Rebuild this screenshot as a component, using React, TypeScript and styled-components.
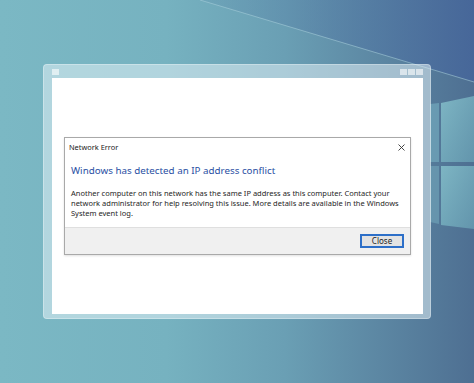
import React from "react";
import styled, { createGlobalStyle } from "styled-components";

const GlobalStyle = createGlobalStyle`
  html, body {
    margin: 0;
    padding: 0;
    width: 100%;
    height: 100%;
    overflow: hidden;
  }
  #root {
    width: 100%;
    height: 100%;
  }
  body {
    font-family: "Noto Sans", "Open Sans", sans-serif;
  }
`;

const Desktop = styled.div`
  position: relative;
  width: 474px;
  height: 383px;
  display: flex;
  align-items: center;
  justify-content: center;
  overflow: hidden;
  background: linear-gradient(90deg, #7bb8c4 0%, #76b2c0 35%, #6a9fb4 60%, #4e6f92 100%);
`;

const Wallpaper = styled.svg`
  position: absolute;
  inset: 0;
  width: 100%;
  height: 100%;
`;

const Window = styled.div`
  position: relative;
  z-index: 1;
  box-sizing: border-box;
  width: 388px;
  height: 255px;
  display: flex;
  flex-direction: column;
  padding: 0 7px 4px 8px;
  border-radius: 4px;
  border: 1px solid rgba(255, 255, 255, 0.3);
  background: rgba(225, 240, 246, 0.55);
`;

const TitleBar = styled.div`
  height: 13px;
  display: flex;
  align-items: center;
  justify-content: space-between;
`;

const Buttons = styled.div`
  display: flex;
  gap: 1px;
`;

const Square = styled.div`
  width: 7px;
  height: 6px;
  background: rgba(255, 255, 255, 0.6);
`;

const Client = styled.div`
  flex: 1;
  background: #ffffff;
  padding: 59px 12px 0 12px;
`;

const Dialog = styled.div`
  height: 118px;
  box-sizing: border-box;
  display: flex;
  flex-direction: column;
  background: #ffffff;
  border: 1px solid #a9a9a9;
  box-shadow: 0 1px 2px rgba(0, 0, 0, 0.12);
`;

const DialogHeader = styled.div`
  height: 18px;
  display: flex;
  align-items: center;
  justify-content: space-between;
  padding: 0 5px 0 4px;
  font-size: 7.4px;
  color: #1a1a1a;
`;

const Body = styled.div`
  flex: 1;
  padding: 8px 6px 0 6px;
`;

const Heading = styled.div`
  font-size: 9.8px;
  line-height: 14px;
  color: #2a4fa3;
`;

const Message = styled.div`
  margin-top: 10px;
  font-size: 7.5px;
  line-height: 10px;
  color: #1e1e1e;
  white-space: nowrap;
`;

const Footer = styled.div`
  height: 27px;
  box-sizing: border-box;
  display: flex;
  justify-content: flex-end;
  padding: 6px 6px 0 0;
  background: #f0f0f0;
  border-top: 1px solid #dfdfdf;
`;

const Button = styled.button`
  box-sizing: border-box;
  width: 44px;
  height: 14px;
  padding: 0;
  font-family: inherit;
  font-size: 8px;
  color: #222;
  background: #e3e3e3;
  border: 2px solid #2d6fc8;
  line-height: 10px;
`;

const CloseIcon = () => (
  <svg width="7" height="7" viewBox="0 0 7 7">
    <path d="M0.5 0.5 L6.5 6.5 M6.5 0.5 L0.5 6.5" stroke="#333" strokeWidth="0.9" />
  </svg>
);

export default function App() {
  return (
    <>
      <GlobalStyle />
      <Desktop>
        <Wallpaper viewBox="0 0 474 383" preserveAspectRatio="none">
          <defs>
            <linearGradient id="sky" x1="0" y1="0" x2="1" y2="0">
              <stop offset="0" stopColor="#5f8fae" stopOpacity="0.2" />
              <stop offset="1" stopColor="#46669a" stopOpacity="0.9" />
            </linearGradient>
            <linearGradient id="pane" x1="0" y1="0" x2="1" y2="1">
              <stop offset="0" stopColor="#8ccad2" stopOpacity="0.75" />
              <stop offset="1" stopColor="#74b4c2" stopOpacity="0.55" />
            </linearGradient>
          </defs>
          <polygon points="200,0 474,0 474,82" fill="url(#sky)" />
          <line x1="200" y1="0" x2="474" y2="82" stroke="#a9d0dc" strokeWidth="1" opacity="0.55" />
          <polygon points="430,104 439,103 439,162 430,162" fill="#7ab6c6" opacity="0.55" />
          <polygon points="441,103 474,96 474,162 441,162" fill="url(#pane)" />
          <polygon points="430,166 439,166 439,224 430,222" fill="#78b0c2" opacity="0.5" />
          <polygon points="441,166 474,166 474,229 441,225" fill="url(#pane)" />
        </Wallpaper>
        <Window>
          <TitleBar>
            <Square />
            <Buttons>
              <Square />
              <Square />
              <Square />
            </Buttons>
          </TitleBar>
          <Client>
            <Dialog>
              <DialogHeader>
                <span>Network Error</span>
                <CloseIcon />
              </DialogHeader>
              <Body>
                <Heading>Windows has detected an IP address conflict</Heading>
                <Message>
                  Another computer on this network has the same IP address as this computer. Contact your
                  <br />
                  network administrator for help resolving this issue. More details are available in the Windows
                  <br />
                  System event log.
                </Message>
              </Body>
              <Footer>
                <Button>Close</Button>
              </Footer>
            </Dialog>
          </Client>
        </Window>
      </Desktop>
    </>
  );
}
